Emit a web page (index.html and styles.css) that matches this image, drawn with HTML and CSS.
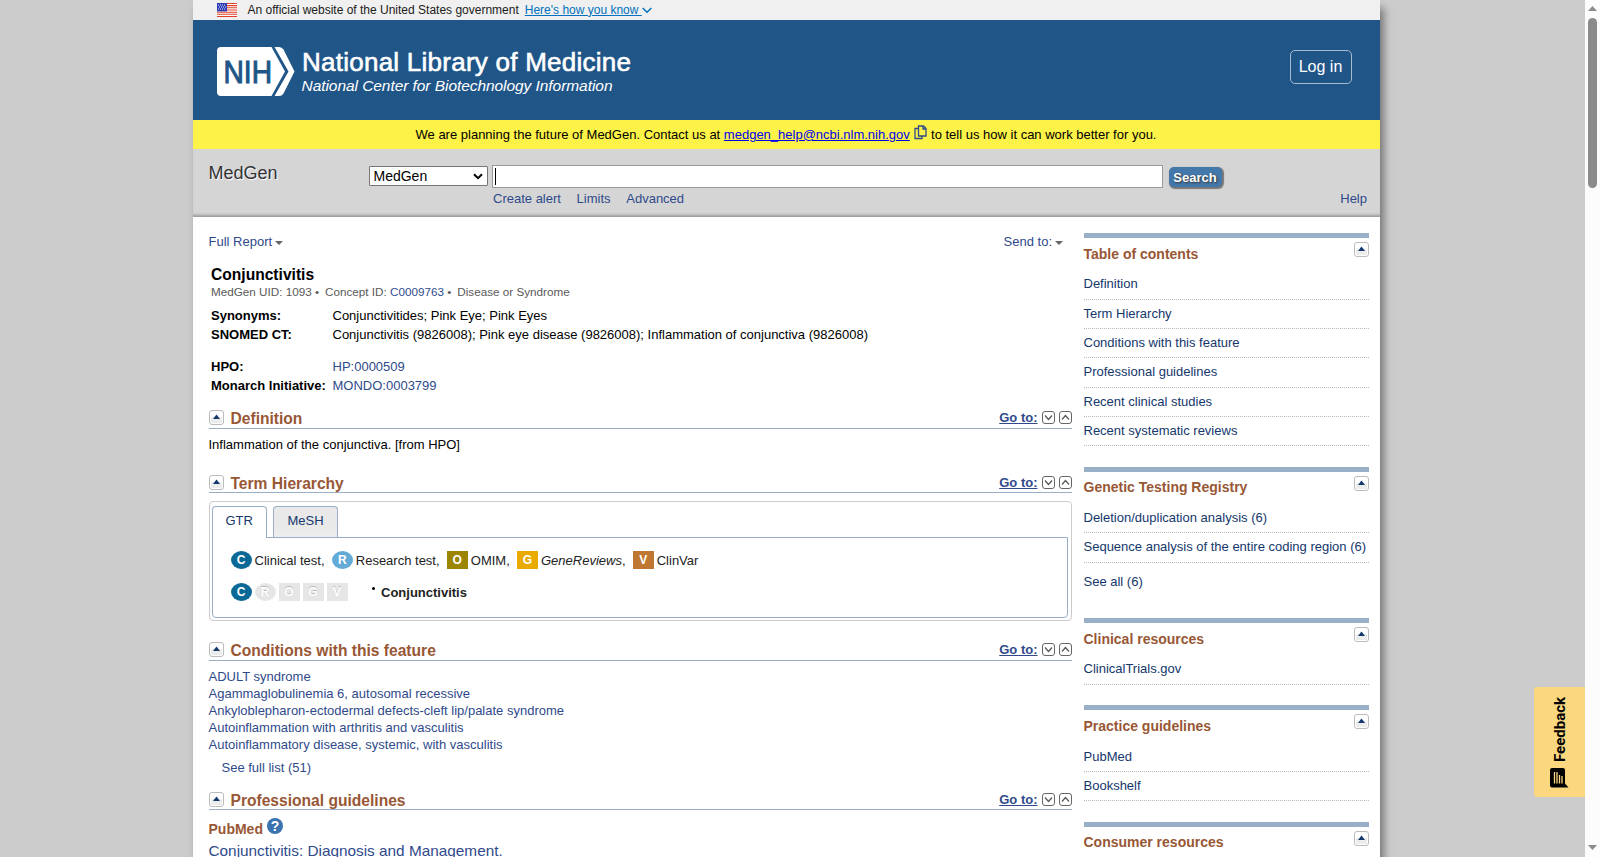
FILE: index.html
```
<!DOCTYPE html>
<html lang="en">
  <head>
    <meta charset="UTF-8" />
    <meta name="viewport" content="width=device-width, initial-scale=1.0" />
    <title>Conjunctivitis - MedGen - NCBI</title>
    <link rel="stylesheet" href="styles.css">
  </head>
  <body>
    <!-- shared icons -->
    <svg class="sprite">
      <symbol id="toggle" viewBox="0 0 15 15">
        <rect x="0.5" y="0.5" width="14" height="14" rx="2.5" fill="#fff" stroke="#bbb" />
        <rect x="2" y="7" width="11" height="6" fill="#ececec" />
        <path d="M7.5 4.6L11 8.9H4z" fill="#14376c" />
      </symbol>
      <symbol id="down" viewBox="0 0 13 13">
        <rect x="0.5" y="0.5" width="12" height="12" rx="2.5" fill="#fff" stroke="#666" />
        <path d="M3 4.5L6.5 8.5L10 4.5" fill="none" stroke="#555" stroke-width="1.2" />
      </symbol>
      <symbol id="up" viewBox="0 0 13 13">
        <rect x="0.5" y="0.5" width="12" height="12" rx="2.5" fill="#fff" stroke="#666" />
        <path d="M3 8.5L6.5 4.5L10 8.5" fill="none" stroke="#555" stroke-width="1.2" />
      </symbol>
    </svg>

    <div class="page">
      <div class="gov">
        <svg class="flag" width="20" height="14" viewBox="0 0 20 14">
          <rect width="20" height="14" fill="#fff" />
          <path d="M0 .5h20M0 2.6h20M0 4.8h20M0 7h20M0 9.2h20M0 11.3h20M0 13.5h20" stroke="#e0402a" stroke-width="1.1" />
          <rect width="10" height="8.4" fill="#2a3bb5" />
          <path d="M1 2h8M2 4h7M1 6h8" stroke="#fff" stroke-width=".9" stroke-dasharray="1 1" />
        </svg>
        <span>An official website of the United States government</span>
        <a class="know" href="#">Here's how you know </a>
        <svg width="10" height="7" viewBox="0 0 10 7"><path d="M.7 1L5 5.2L9.3 1" fill="none" stroke="#0071bc" stroke-width="1.5" /></svg>
      </div>

      <header class="header">
        <svg class="logo" width="420" height="50" viewBox="0 0 420 50">
          <path d="M4 0H54.5L68 24.5L54.5 49H4Q0 49 0 45V4Q0 0 4 0z" fill="#fff" />
          <path d="M57.5 0H62Q65 0 66.500 2.500L77.500 24.500L66.500 46.500Q65 49 62 49H57.500L71.500 24.500z" fill="#fff" />
          <text class="nih" x="6.5" y="35.500" textLength="48.5" lengthAdjust="spacingAndGlyphs">NIH</text>
          <text class="nlm" x="85" y="24" textLength="329">National Library of Medicine</text>
          <text class="ncbi" x="84.5" y="44" textLength="311">National Center for Biotechnology Information</text>
        </svg>
        <a class="login" href="#">Log in</a>
      </header>

      <div class="notice">
        We are planning the future of MedGen. Contact us at
        <a href="#">medgen_help@ncbi.nlm.nih.gov</a>
        <svg class="copy" width="13" height="15" viewBox="0 0 13 15">
          <path d="M4.500 1H9.500L12 3.500V11H4.500zM9 1V4H12M4 3.500H1V13.500H8V11.500" fill="none" stroke="#2f4a8b" stroke-width="1.3" />
        </svg>
        to tell us how it can work better for you.
      </div>

      <div class="search">
        <div class="search-name">MedGen</div>
        <div class="search-form">
          <div class="search-row">
            <div class="db">MedGen
              <svg width="10" height="7" viewBox="0 0 10 7"><path d="M1 1.200L5 5.200L9 1.200" fill="none" stroke="#000" stroke-width="2" /></svg>
            </div>
            <div class="term"><i class="caret"></i></div>
            <button class="search-btn">Search</button>
          </div>
          <div class="search-links">
            <a href="#">Create alert</a>
            <a href="#">Limits</a>
            <a href="#">Advanced</a>
            <a class="help" href="#">Help</a>
          </div>
        </div>
      </div>

      <div class="content">
        <main class="main">
          <div class="display">
            <a class="drop" href="#">Full Report</a>
            <a class="drop" href="#">Send to:</a>
          </div>

          <h1 class="title">Conjunctivitis</h1>
          <div class="ids">
            <span>MedGen UID: 1093 •</span>
            <span>Concept ID: <a href="#">C0009763</a> •</span>
            <span>Disease or Syndrome</span>
          </div>
          <dl class="facts">
            <dt>Synonyms:</dt>
            <dd>Conjunctivitides; Pink Eye; Pink Eyes</dd>
            <dt>SNOMED CT:</dt>
            <dd>Conjunctivitis (9826008); Pink eye disease (9826008); Inflammation of conjunctiva (9826008)</dd>
          </dl>
          <dl class="facts ext">
            <dt>HPO:</dt>
            <dd><a href="#">HP:0000509</a></dd>
            <dt>Monarch Initiative:</dt>
            <dd><a href="#">MONDO:0003799</a></dd>
          </dl>

          <div class="head head-def">
            <svg class="toggle"><use href="#toggle" /></svg>
            <h2>Definition</h2>
            <a class="goto" href="#">Go to:</a>
            <svg class="nav"><use href="#down" /></svg>
            <svg class="nav"><use href="#up" /></svg>
          </div>
          <p class="definition">Inflammation of the conjunctiva. [from HPO]</p>

          <div class="head head-term">
            <svg class="toggle"><use href="#toggle" /></svg>
            <h2>Term Hierarchy</h2>
            <a class="goto" href="#">Go to:</a>
            <svg class="nav"><use href="#down" /></svg>
            <svg class="nav"><use href="#up" /></svg>
          </div>
          <div class="tabs">
            <div class="tab-row">
              <a class="tab active" href="#">GTR</a>
              <a class="tab" href="#">MeSH</a>
            </div>
            <div class="panel">
              <div class="legend">
                <b class="badge round c">C</b><span>Clinical test,</span>
                <b class="badge round r">R</b><span>Research test,</span>
                <b class="badge o">O</b><span>OMIM,</span>
                <b class="badge g">G</b><span><em>GeneReviews</em>,</span>
                <b class="badge v">V</b><span>ClinVar</span>
              </div>
              <div class="tree">
                <b class="badge round c">C</b>
                <b class="badge round off">R</b>
                <b class="badge off">O</b>
                <b class="badge off">G</b>
                <b class="badge off">V</b>
                <i class="dot"></i>
                <strong>Conjunctivitis</strong>
              </div>
            </div>
          </div>

          <div class="head head-cond">
            <svg class="toggle"><use href="#toggle" /></svg>
            <h2>Conditions with this feature</h2>
            <a class="goto" href="#">Go to:</a>
            <svg class="nav"><use href="#down" /></svg>
            <svg class="nav"><use href="#up" /></svg>
          </div>
          <ul class="conditions">
            <li><a href="#">ADULT syndrome</a></li>
            <li><a href="#">Agammaglobulinemia 6, autosomal recessive</a></li>
            <li><a href="#">Ankyloblepharon-ectodermal defects-cleft lip/palate syndrome</a></li>
            <li><a href="#">Autoinflammation with arthritis and vasculitis</a></li>
            <li><a href="#">Autoinflammatory disease, systemic, with vasculitis</a></li>
          </ul>
          <a class="full-list" href="#">See full list (51)</a>

          <div class="head head-prof">
            <svg class="toggle"><use href="#toggle" /></svg>
            <h2>Professional guidelines</h2>
            <a class="goto" href="#">Go to:</a>
            <svg class="nav"><use href="#down" /></svg>
            <svg class="nav"><use href="#up" /></svg>
          </div>
          <h3 class="pubmed">PubMed <span class="hint">?</span></h3>
          <a class="article" href="#">Conjunctivitis: Diagnosis and Management.</a>
        </main>

        <aside class="side">
          <section class="portlet">
            <div class="portlet-head"><h3>Table of contents</h3><svg class="toggle"><use href="#toggle" /></svg></div>
            <ul>
              <li><a href="#">Definition</a></li>
              <li><a href="#">Term Hierarchy</a></li>
              <li><a href="#">Conditions with this feature</a></li>
              <li><a href="#">Professional guidelines</a></li>
              <li><a href="#">Recent clinical studies</a></li>
              <li><a href="#">Recent systematic reviews</a></li>
            </ul>
          </section>
          <section class="portlet">
            <div class="portlet-head"><h3>Genetic Testing Registry</h3><svg class="toggle"><use href="#toggle" /></svg></div>
            <ul>
              <li><a href="#">Deletion/duplication analysis (6)</a></li>
              <li><a href="#">Sequence analysis of the entire coding region (6)</a></li>
            </ul>
            <a class="see-all" href="#">See all (6)</a>
          </section>
          <section class="portlet">
            <div class="portlet-head"><h3>Clinical resources</h3><svg class="toggle"><use href="#toggle" /></svg></div>
            <ul>
              <li><a href="#">ClinicalTrials.gov</a></li>
            </ul>
          </section>
          <section class="portlet">
            <div class="portlet-head"><h3>Practice guidelines</h3><svg class="toggle"><use href="#toggle" /></svg></div>
            <ul>
              <li><a href="#">PubMed</a></li>
              <li><a href="#">Bookshelf</a></li>
            </ul>
          </section>
          <section class="portlet">
            <div class="portlet-head"><h3>Consumer resources</h3><svg class="toggle"><use href="#toggle" /></svg></div>
          </section>
        </aside>
      </div>
    </div>

    <div class="scrollbar">
      <svg width="9" height="5" viewBox="0 0 9 5"><path d="M4.500 0L9 5H0z" fill="#8b8b8b" /></svg>
      <div class="thumb"></div>
      <svg class="arrow-down" width="9" height="5" viewBox="0 0 9 5"><path d="M0 0H9L4.500 5z" fill="#8b8b8b" /></svg>
    </div>

    <!-- floats over the right edge of the page -->
    <div class="feedback">
      <span>Feedback</span>
      <svg width="19" height="20" viewBox="0 0 19 20">
        <path d="M2 0H13Q15 0 15 2V15.500L18.500 19.500H2Q0 19.500 0 17.500V2Q0 0 2 0z" fill="#000" />
        <path d="M4.500 4V15.500M7 4V15.500M9.500 7V15.500M12 8V15.500" stroke="#fbd87f" stroke-width="1.300" />
      </svg>
    </div>
  </body>
</html>
```
FILE: styles.css
```
body {
  margin: 0;
  height: 857px;
  overflow: hidden;
  display: flex;
  justify-content: space-between;
  background: #ccc;
  font: 13px/17px "Liberation Sans", Arial, sans-serif;
  color: #000;
}
h1, h2, h3, p, ul, dl, dd {
  margin: 0;
  padding: 0;
}
ul {
  list-style: none;
}
a {
  color: #2f4a8b;
  text-decoration: none;
}
svg {
  display: block;
  flex: none;
}
.sprite {
  position: absolute;
  width: 0;
  height: 0;
}
.page {
  width: 1187px;
  height: 857px;
  margin-left: 192.500px;
  overflow: hidden;
  flex: none;
  background: #fff;
  box-shadow: 4px 8px 8px #777;
}

/* government banner */
.gov {
  height: 20px;
  padding-left: 24px;
  display: flex;
  align-items: center;
  background: #f0f0f0;
  font-size: 12px;
  color: #1b1b1b;
}
.flag {
  margin-right: 11px;
}
.know {
  margin-left: 6px;
  color: #0071bc;
  text-decoration: underline;
  white-space: pre;
}

/* header */
.header {
  height: 100px;
  padding: 0 28px 0 24px;
  box-sizing: border-box;
  display: flex;
  justify-content: space-between;
  background: #205588;
}
.logo {
  margin-top: 27px;
}
.logo text {
  fill: #fff;
}
.logo .nih {
  font-size: 31px;
  fill: #205588;
  stroke: #205588;
  stroke-width: 1px;
}
.logo .nlm {
  font-size: 26px;
  stroke: #fff;
  stroke-width: 0.6px;
}
.logo .ncbi {
  font-size: 15.500px;
  font-style: italic;
}
.login {
  width: 60px;
  height: 32px;
  margin-top: 30px;
  border: 1px solid #a6bbcf;
  border-radius: 5px;
  color: #fff;
  font-size: 16px;
  line-height: 31px;
  text-align: center;
}

.notice {
  height: 29px;
  line-height: 29px;
  text-align: center;
  background: #fdf248;
}
.notice a {
  color: #00e;
  text-decoration: underline;
}
.copy {
  display: inline-block;
  margin-left: 1px;
  vertical-align: -1px;
}

/* search bar */
.search {
  height: 68px;
  display: flex;
  background: #d5d5d5;
  box-shadow: inset 0 -4px 3px -2px #999;
}
.search-name {
  width: 160px;
  padding: 13px 0 0 16px;
  font-size: 18px;
  line-height: 22px;
  color: #333;
  text-shadow: 1px 1px 1px #fff;
}
.search-form {
  flex: 1;
  padding: 16px 12.500px 0 0;
}
.search-row {
  display: flex;
  height: 23px;
}
.db {
  width: 109px;
  height: 18px;
  margin: 1px 4px 0 0;
  padding: 0 4px;
  display: flex;
  justify-content: space-between;
  align-items: center;
  background: #fff;
  border: 1px solid #767676;
  border-radius: 1px;
  font-size: 14px;
}
.term {
  width: 671px;
  padding: 2px;
  box-sizing: border-box;
  background: #fff;
  border: 1px solid #999;
}
.caret {
  display: block;
  width: 1px;
  height: 17px;
  background: #000;
}
.search-btn {
  width: 53px;
  height: 20px;
  margin: 2px 0 0 6px;
  padding: 1px 0 0;
  border: 0;
  border-radius: 5px;
  background: #4477aa;
  box-shadow: 1px 1px 1px 1px #777;
  color: #fff;
  font: bold 13px/19px "Liberation Sans", Arial, sans-serif;
  text-shadow: 1px 1px 2px #333;
}
.search-links {
  display: flex;
  gap: 15.700px;
  padding: 2px 0 0 124.500px;
}
.help {
  margin-left: auto;
}

.content {
  display: flex;
  gap: 12px;
  padding: 16px 11px 0 16px;
}
.main {
  width: 863px;
  flex: none;
}
.display {
  display: flex;
  justify-content: space-between;
  padding-right: 8.500px;
}
.drop::after {
  content: "";
  display: inline-block;
  margin-left: 3px;
  vertical-align: 1px;
  border: 4px solid transparent;
  border-top-color: #666;
  border-bottom: 0;
}
.title {
  margin: 16px 0 0 2.500px;
  font-size: 15.600px;
  line-height: 18px;
}
.ids {
  display: flex;
  gap: 6px;
  margin: 0 0 6px 2.500px;
  font-size: 11.700px;
  line-height: 16px;
  color: #595959;
}
.facts {
  display: grid;
  grid-template-columns: 121.500px 1fr;
  margin-left: 2.500px;
  line-height: 19px;
}
.facts dt {
  font-weight: bold;
}
.ext {
  margin-top: 13px;
}

/* section headings */
.head {
  display: flex;
  height: 18px;
  border-bottom: 1px solid #98afc7;
}
.head h2 {
  flex: 1;
  margin-left: 7px;
  font-size: 15.600px;
  line-height: 18px;
  color: #985735;
}
.toggle {
  width: 15px;
  height: 15px;
}
.goto {
  margin-right: 4px;
  font-weight: bold;
  line-height: 15px;
  text-decoration: underline;
}
.nav {
  width: 13px;
  height: 13px;
  margin-top: 1px;
}
.nav + .nav {
  margin-left: 4px;
}
.head-def {
  margin-top: 15px;
}
.head-term {
  margin-top: 22px;
  height: 17px;
}
.head-cond {
  margin-top: 21px;
}
.head-prof {
  margin-top: 16px;
  height: 17px;
}
.definition {
  margin-top: 7px;
}

/* hierarchy tabs */
.tabs {
  margin-top: 8px;
  padding: 4px 3px 2px 2px;
  border: 1px solid #ccc;
  border-radius: 4px;
}
.tab-row {
  display: flex;
  gap: 6px;
}
.tab {
  height: 30px;
  padding: 0 13px;
  background: linear-gradient(#e9e9e9 60%, #eee);
  border: 1px solid #98afc7;
  border-bottom: 0;
  border-radius: 4px 4px 0 0;
  line-height: 28px;
  color: #14376c;
}
.tab.active {
  background: #fff;
  padding-right: 13.500px;
  margin-bottom: -1px;
  height: 31px;
  z-index: 1;
}
.panel {
  height: 50px;
  padding: 13px 18px 16px;
  border: 1px solid #98afc7;
  border-radius: 0 0 4px 4px;
  color: #222;
}
.legend, .tree {
  display: flex;
  align-items: center;
  height: 18px;
}
.legend span {
  margin: 0 7.200px 0 3px;
}
.tree {
  margin-top: 14px;
}
.tree .badge {
  margin-right: 3px;
}
.badge {
  width: 21px;
  height: 18px;
  font-size: 12px;
  line-height: 18px;
  text-align: center;
  color: #fff;
}
.round {
  border-radius: 50%;
}
.c { background: #0b6997; }
.r { background: #63abd6; }
.o { background: #9c8500; }
.g { background: #eaab00; }
.v { background: #bd7730; }
.off {
  background: #e6e6e6;
  text-shadow: 0 -1px 0 #bbb;
}
.dot {
  width: 3px;
  height: 3px;
  margin: -7px 6px 0 21.500px;
  border-radius: 50%;
  background: #000;
}

.conditions {
  margin-top: 7px;
}
.full-list {
  display: block;
  margin: 6px 0 0 13px;
}
.pubmed {
  display: flex;
  margin-top: 8px;
  font-size: 14px;
  line-height: 22px;
  color: #985735;
}
.hint {
  width: 16px;
  height: 16px;
  margin-left: 4px;
  border-radius: 50%;
  background: #3a73af;
  color: #fff;
  font-size: 14px;
  line-height: 16px;
  text-align: center;
}
.article {
  display: block;
  margin-top: 2px;
  font-size: 15.350px;
  line-height: 18px;
}

/* right column */
.side {
  flex: 1;
}
.side a {
  color: #14376c;
}
.portlet {
  padding-bottom: 20.600px;
}
.portlet-head {
  display: flex;
  justify-content: space-between;
  height: 32.400px;
  border-top: 5px solid #98afc7;
}
.portlet-head h3 {
  padding-top: 7.600px;
  font-size: 14px;
  line-height: 17px;
  color: #985735;
}
.portlet-head .toggle {
  margin-top: 4px;
}
.portlet li {
  height: 28.300px;
  line-height: 27.400px;
  border-bottom: 1px dotted #bbb;
}
.see-all {
  display: block;
  padding: 10.200px 0 7.400px;
}

/* page scrollbar */
.scrollbar {
  width: 15px;
  height: 857px;
  padding: 6px 0 7px;
  box-sizing: border-box;
  flex: none;
  display: flex;
  flex-direction: column;
  align-items: center;
  background: #fcfcfc;
}
.thumb {
  width: 9px;
  height: 170px;
  margin-top: 7px;
  border-radius: 5px;
  background: #8b8b8b;
}
.arrow-down {
  margin-top: auto;
}

.feedback {
  position: absolute;
  right: 15px;
  top: 687px;
  width: 51px;
  height: 110px;
  padding: 10px 0 9px;
  box-sizing: border-box;
  display: flex;
  flex-direction: column;
  align-items: center;
  justify-content: space-between;
  background: #fbd87f;
  border-radius: 3px 0 0 3px;
}
.feedback span {
  writing-mode: vertical-rl;
  transform: rotate(180deg);
  font: bold 15px/20px Roboto, sans-serif;
}
```
